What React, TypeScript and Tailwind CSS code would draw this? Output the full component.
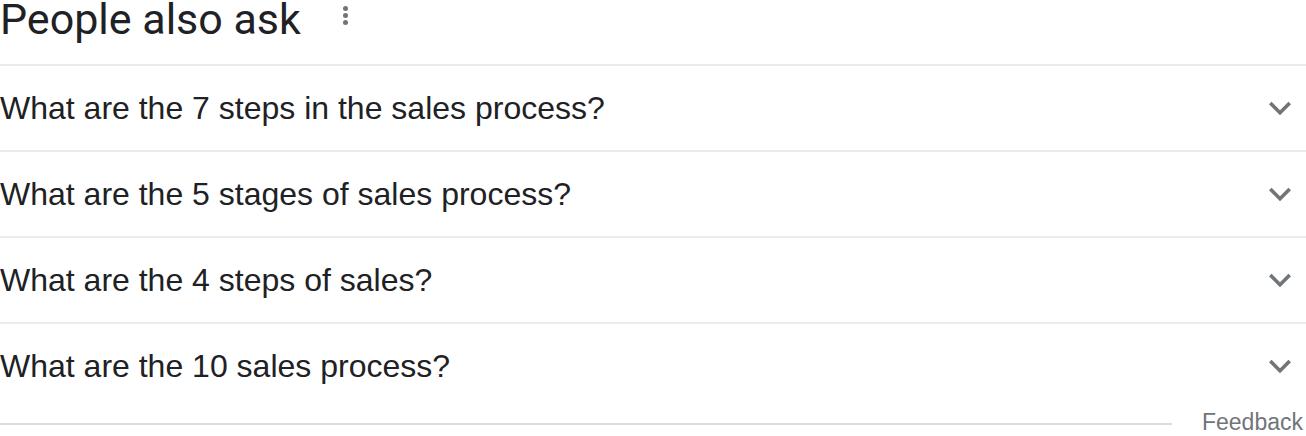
import { useState } from "react";

const questions = [
  "What are the 7 steps in the sales process?",
  "What are the 5 stages of sales process?",
  "What are the 4 steps of sales?",
  "What are the 10 sales process?",
];

function Chevron() {
  return (
    <svg viewBox="0 0 24 24" className="h-[44px] w-[44px] fill-[#70757a]">
      <path d="M16.59 8.59L12 13.17 7.41 8.59 6 10l6 6 6-6z" />
    </svg>
  );
}

export default function App() {
  const [open, setOpen] = useState<number | null>(null);
  return (
    <div className="h-[436px] w-[1306px] overflow-hidden bg-white font-['Liberation_Sans',Arial,sans-serif] text-[#202124]">
      {/* header */}
      <div className="flex h-[64px] items-start">
        <h2 className="-mt-[2px] font-['Roboto',sans-serif] text-[43px] leading-none font-normal">
          People also ask
        </h2>
        <div className="ml-[42px] mt-[6px] flex flex-col gap-[2px]">
          <span className="h-[5px] w-[5px] rounded-full bg-[#70757a]" />
          <span className="h-[5px] w-[5px] rounded-full bg-[#70757a]" />
          <span className="h-[5px] w-[5px] rounded-full bg-[#70757a]" />
        </div>
      </div>

      {/* questions */}
      {questions.map((q, i) => (
        <div key={q} className="border-t-2 border-[#ebebeb]">
          <button
            onClick={() => setOpen(open === i ? null : i)}
            className="flex h-[84px] w-full items-center justify-between text-left"
          >
            <span className="text-[32px] leading-none">{q}</span>
            <span className="mr-[4px]">
              <Chevron />
            </span>
          </button>
        </div>
      ))}

      {/* feedback */}
      <div className="mt-[1px] flex items-center">
        <div className="mt-[4px] h-[2px] flex-1 bg-[#dadce0]" />
        <span className="ml-[30px] mr-[3px] text-[23px] leading-[26px] text-[#70757a]">Feedback</span>
      </div>
    </div>
  );
}
